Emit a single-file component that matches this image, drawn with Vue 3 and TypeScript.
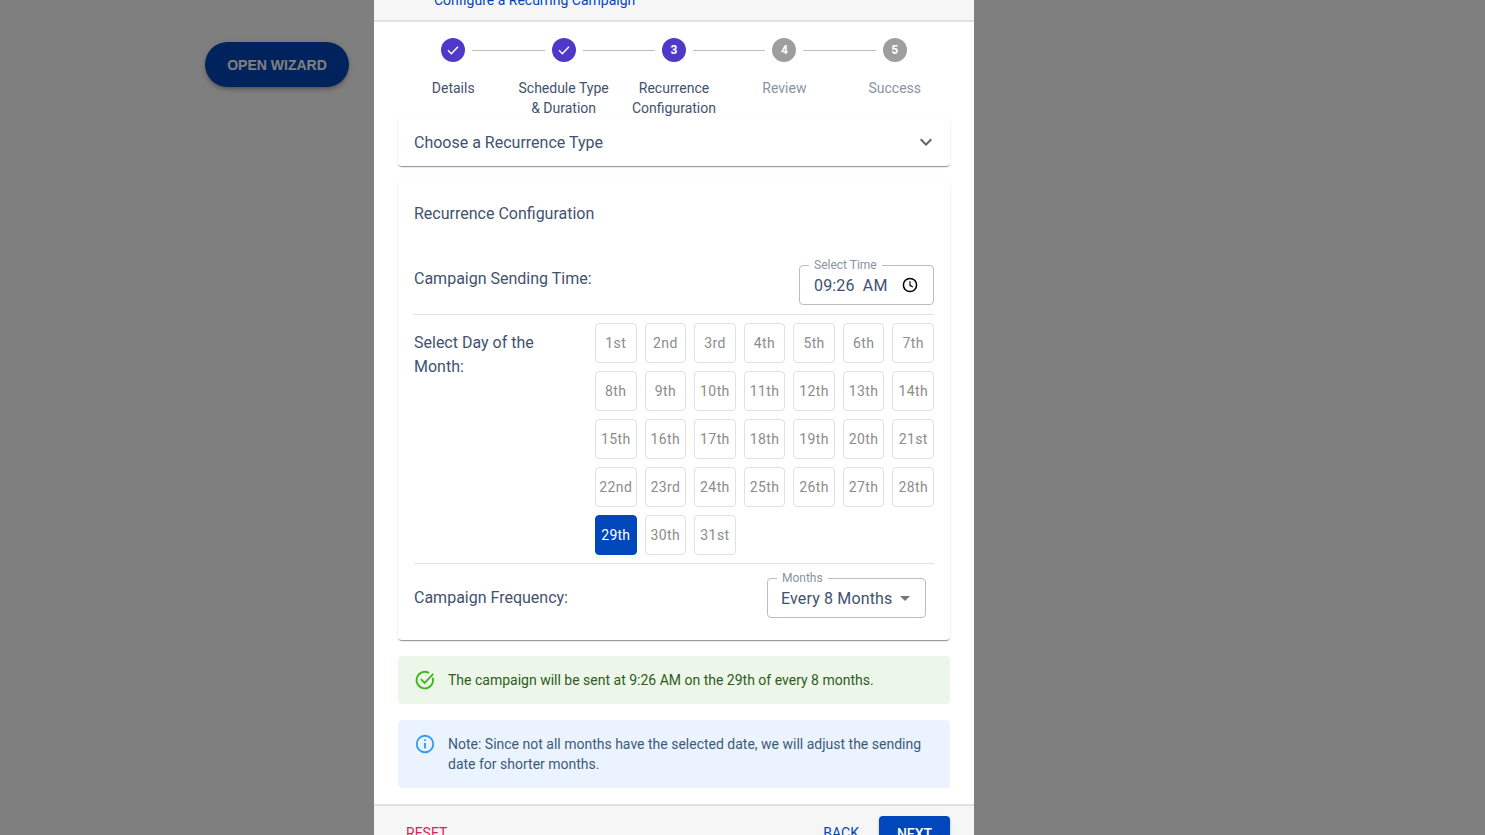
<script setup lang="ts">
const steps = [
  { label: ['Details'], state: 'done', n: 1 },
  { label: ['Schedule Type', '& Duration'], state: 'done', n: 2 },
  { label: ['Recurrence', 'Configuration'], state: 'active', n: 3 },
  { label: ['Review'], state: 'todo', n: 4 },
  { label: ['Success'], state: 'todo', n: 5 },
]
function ord(n: number): string {
  if (n === 1 || n === 21 || n === 31) return n + 'st'
  if (n === 2 || n === 22) return n + 'nd'
  if (n === 3 || n === 23) return n + 'rd'
  return n + 'th'
}
const days = Array.from({ length: 31 }, (_, i) => i + 1)
</script>

<template>
  <div class="page">
    <button class="open">OPEN WIZARD</button>
    <div class="backdrop"></div>
    <div class="modal">
      <header class="head"><span class="title">Configure a Recurring Campaign</span></header>
      <main class="body">
        <div class="stepper">
          <div v-for="s in steps" :key="s.n" class="step">
            <div class="track">
              <span class="line" :class="{ hidden: s.n === 1 }"></span>
              <span class="dot" :class="s.state">
                <svg v-if="s.state === 'done'" viewBox="0 0 24 24" width="16" height="16"><path d="M4.5 12.5l5 5L19.5 7" fill="none" stroke="#fff" stroke-width="2.2"/></svg>
                <template v-else>{{ s.n }}</template>
              </span>
              <span class="line" :class="{ hidden: s.n === 5 }"></span>
            </div>
            <div class="label" :class="{ muted: s.state === 'todo' }">
              <div v-for="l in s.label" :key="l">{{ l }}</div>
            </div>
          </div>
        </div>

        <section class="accordion">
          <span>Choose a Recurrence Type</span>
          <svg viewBox="0 0 24 24" width="24" height="24"><path d="M7.41 8.59 12 13.17l4.59-4.58L18 10l-6 6-6-6z" fill="#5f6368"/></svg>
        </section>

        <section class="card">
          <h3 class="card-title">Recurrence Configuration</h3>
          <div class="row time-row">
            <span class="row-label">Campaign Sending Time:</span>
            <div class="field time-field">
              <span class="legend">Select Time</span>
              <span class="value">09:26&nbsp; AM</span>
              <svg viewBox="0 0 24 24" width="18" height="18"><circle cx="12" cy="12" r="8.8" fill="none" stroke="#000" stroke-width="2"/><path d="M12 7v5.4l3.8 2.3" fill="none" stroke="#000" stroke-width="1.6"/></svg>
            </div>
          </div>
          <div class="row day-row">
            <div class="row-label day-label">Select Day of the Month:</div>
            <div class="days">
              <div v-for="d in days" :key="d" class="day" :class="{ selected: d === 29 }">{{ ord(d) }}</div>
            </div>
          </div>
          <div class="row freq-row">
            <span class="row-label">Campaign Frequency:</span>
            <div class="field freq-field">
              <span class="legend">Months</span>
              <span class="value">Every 8 Months</span>
              <span class="caret"></span>
            </div>
          </div>
        </section>

        <div class="alert success">
          <svg viewBox="0 0 24 24" width="22" height="22"><path d="M20.6 10.2A9 9 0 1 1 15.8 4" fill="none" stroke="#3cb71c" stroke-width="2" stroke-linecap="round"/><path d="M8 11.5l3.6 3.6L20.5 5.8" fill="none" stroke="#3cb71c" stroke-width="2" stroke-linecap="round"/></svg>
          <p>The campaign will be sent at 9:26 AM on the 29th of every 8 months.</p>
        </div>
        <div class="alert info">
          <svg viewBox="0 0 24 24" width="22" height="22"><circle cx="12" cy="12" r="9" fill="none" stroke="#2f9bf4" stroke-width="2"/><path d="M12 11v6M12 7v1.8" fill="none" stroke="#2f9bf4" stroke-width="2"/></svg>
          <p>Note: Since not all months have the selected date, we will adjust the sending date for shorter months.</p>
        </div>
      </main>
      <footer class="foot">
        <span class="reset">RESET</span>
        <span class="spacer"></span>
        <span class="back">BACK</span>
        <button class="next">NEXT</button>
      </footer>
    </div>
  </div>
</template>

<style>
html, body { margin: 0; height: 100%; overflow: hidden; }
</style>

<style scoped>
.page {
  position: relative;
  width: 1485px;
  height: 835px;
  overflow: hidden;
  background: #fff;
  font-family: Roboto, "Liberation Sans", sans-serif;
  color: #42526e;
}
.open {
  position: absolute;
  left: 205px;
  top: 42px;
  width: 144px;
  height: 45px;
  border: 0;
  border-radius: 22.5px;
  background: #0047bb;
  color: #fff;
  font: 700 14px "Liberation Sans", Arial, sans-serif;
  box-shadow: 0 3px 3px -2px rgba(0,0,0,.2), 0 3px 4px rgba(0,0,0,.14), 0 1px 8px rgba(0,0,0,.12);
}
.backdrop { position: absolute; inset: 0; background: rgba(0,0,0,.5); }
.modal {
  position: absolute;
  left: 374px;
  top: -30px;
  width: 600px;
  background: #fff;
  display: flex;
  flex-direction: column;
}
.head {
  height: 50px;
  box-sizing: border-box;
  background: #f6f6f6;
  border-bottom: 2px solid #e0e0e0;
  padding: 12px 60px;
  height: 52px;
  font-size: 14px;
  color: #0047bb;
}
.title { display: block; line-height: 20px; margin-top: 8px; }
.body { padding: 16px 24px; display: flex; flex-direction: column; }
.stepper { display: flex; height: 80px; }
.step { width: 110.4px; display: flex; flex-direction: column; align-items: center; }
.stepper { margin: 0 0 0 -.0px; padding: 0; }
.track { width: 100%; display: flex; align-items: center; height: 24px; }
.line { flex: 1; height: 1px; background: #bdbdbd; margin: 0 -1px; }
.line.hidden { visibility: hidden; }
.dot {
  width: 24px; height: 24px; flex: none; border-radius: 50%;
  margin: 0 8px;
  display: flex; align-items: center; justify-content: center;
  color: #fff; font-size: 12px; font-weight: 700;
}
.dot.done, .dot.active { background: #5038c8; }
.dot.todo { background: #9e9e9e; }
.label { margin-top: 16px; text-align: center; font-size: 14px; line-height: 20px; white-space: nowrap; }
.label.muted { color: #8993a4; }
.accordion {
  height: 48px;
  margin-top: 0;
  padding: 0 16px;
  display: flex; align-items: center; justify-content: space-between;
  border-radius: 4px;
  font-size: 16px;
  background: #fff;
  box-shadow: 0 2px 1px -1px rgba(0,0,0,.3), 0 1px 1px rgba(0,0,0,.14), 0 1px 3px rgba(0,0,0,.08);
}
.accordion svg { margin-right: -4px; }
.card {
  margin-top: 16px;
  height: 458px;
  box-sizing: border-box;
  padding: 0 16px;
  border-radius: 4px;
  background: #fff;
  box-shadow: 0 2px 1px -1px rgba(0,0,0,.3), 0 1px 1px rgba(0,0,0,.14), 0 1px 3px rgba(0,0,0,.08);
}
.card-title { margin: 0; padding-top: 20px; font-weight: 400; font-size: 16px; line-height: 24px; height: 60px; box-sizing: content-box; height: 40px; }
.row-label { font-size: 16px; line-height: 24px; }
.row { display: flex; align-items: center; justify-content: space-between; }
.time-row { height: 74px; padding-top: 0; border-bottom: 1px solid #e0e0e0; box-sizing: border-box; margin-top: 0; padding-top: 2px; padding-bottom: 0; height: 73px; }
.field {
  position: relative;
  box-sizing: border-box;
  height: 40px;
  border: 1px solid #b8bcc4;
  border-radius: 4px;
  display: flex; align-items: center;
  font-size: 16px;
}
.legend {
  position: absolute; top: -8px; left: 9px;
  padding: 0 5px;
  background: #fff;
  color: #8993a4;
  font-size: 12px; line-height: 14px;
}
.time-field { width: 135px; padding: 0 14px; justify-content: space-between; margin-top: 12px; }
.freq-field { width: 159px; padding: 0 13px; margin-right: 8px; }
.value { white-space: nowrap; letter-spacing: .15px; }
.caret { margin-left: 8px; border-left: 5px solid transparent; border-right: 5px solid transparent; border-top: 5px solid #757575; }
.day-row { align-items: flex-start; padding: 8px 0; border-bottom: 1px solid #e0e0e0; justify-content: flex-start; }
.day-label { width: 181px; flex: none; margin-top: 8px; padding-right: 30px; box-sizing: border-box; }
.days { flex: 1; display: grid; grid-template-columns: repeat(7, 1fr); column-gap: 8px; row-gap: 8px; }
.day {
  height: 40px; box-sizing: border-box;
  border: 1px solid #e0e0e0; border-radius: 4px;
  display: flex; align-items: center; justify-content: center;
  font-size: 14px; color: #8c8c8c; letter-spacing: .4px;
}
.day.selected { background: #0047bb; border-color: #0047bb; color: #fff; letter-spacing: .2px; }
.freq-row { height: 68px; }
.alert {
  margin-top: 16px;
  border-radius: 4px;
  padding: 14px 16px;
  display: flex; gap: 12px; align-items: flex-start;
  font-size: 14px; line-height: 20px;
}
.alert p { margin: 0; padding-top: 0; }
.alert svg { flex: none; margin-top: -1px; margin-left: 0; }
.alert.success { background: #edf7e9; color: #2e5c22; height: 48px; box-sizing: border-box; }
.alert.info { background: #ebf4fe; color: #3b5a7a; height: 68px; box-sizing: border-box; }
.foot {
  background: #f6f6f6;
  border-top: 2px solid #e0e0e0;
  height: 60px;
  padding: 10px 24px 0 32px;
  display: flex; align-items: flex-start;
  font-size: 14px;
}
.spacer { flex: 1; }
.reset { color: #e31b54; margin-top: 9px; }
.back { color: #0047bb; margin-top: 9px; margin-right: 20px; }
.next {
  width: 71px; height: 36px; border: 0; border-radius: 4px;
  background: #0047bb; color: #fff;
  font: 500 14px Roboto, sans-serif;
  box-shadow: 0 2px 3px rgba(0,0,0,.25);
}
</style>
